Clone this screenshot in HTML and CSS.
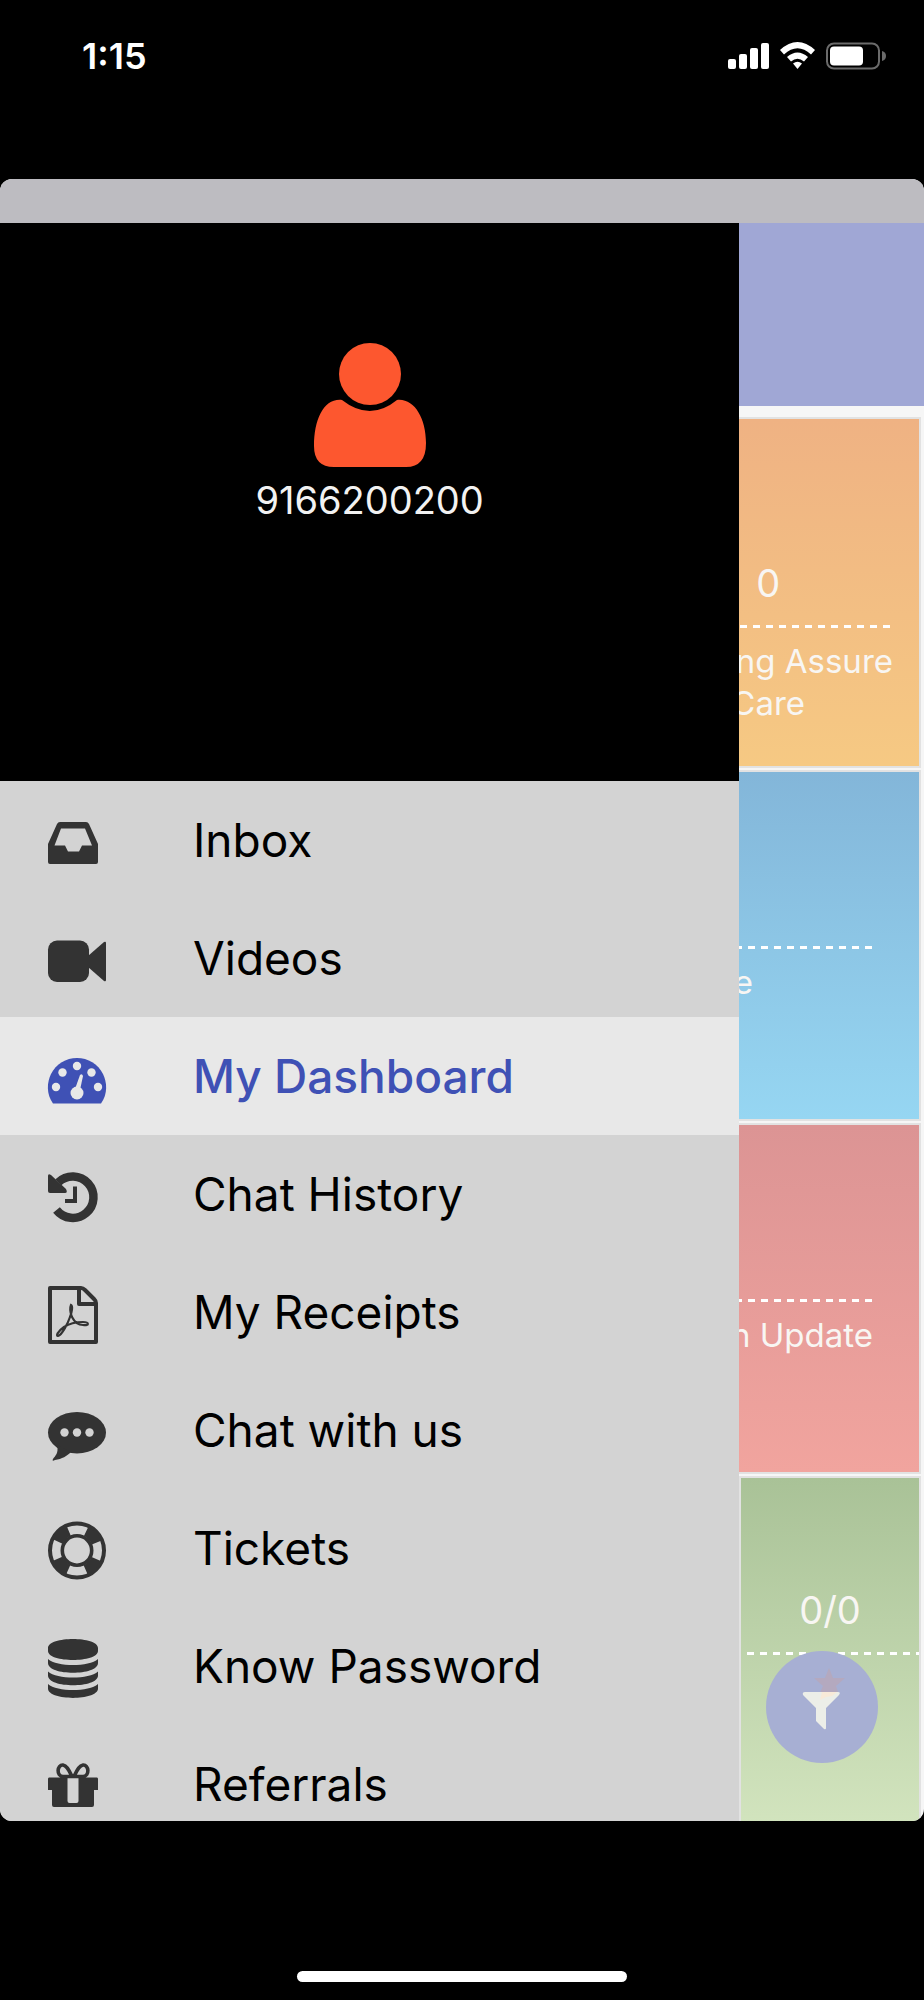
FILE: index.html
```html
<!DOCTYPE html>
<html lang="en">
<head>
<meta charset="utf-8">
<meta name="viewport" content="width=device-width, initial-scale=1">
<title>My Dashboard</title>
<link rel="stylesheet" href="styles.css">
</head>
<body>
<div class="phone">
  <header class="status">
    <time class="clock">1:15</time>
    <svg class="signals" width="158" height="28" viewBox="0 0 158 28" fill="#fff" aria-hidden="true">
      <rect x="0" y="17" width="8" height="10" rx="2"/>
      <rect x="11" y="12" width="8" height="15" rx="2"/>
      <rect x="22" y="6" width="8" height="21" rx="2"/>
      <rect x="33" y="1" width="8" height="26" rx="2"/>
      <path d="M52 8Q69.500 -8 87 8L83 12.500Q69.500 0 56 12.500Z"/>
      <path d="M59 15Q69.500 6 80 15L76 19.500Q69.500 14 63 19.500Z"/>
      <path d="M65 21.500Q69.500 18 74 21.500L69.500 27Z"/>
      <rect x="99" y="1.500" width="52" height="25" rx="7" fill="none" stroke="#6b6b6b" stroke-width="2"/>
      <rect x="102" y="4.500" width="33" height="19" rx="4"/>
      <path d="M154 9q4 1 4 5t-4 5z" fill="#6b6b6b"/>
    </svg>
  </header>

  <div class="app">
    <div class="app-strip"></div>
    <div class="stage">
      <main class="content">
        <div class="toolbar"></div>
        <div class="cards">
          <section class="card card-orange">
            <p class="count">0</p>
            <p class="caption"><span class="line line-end">ng Assure</span><span class="line">Care</span></p>
          </section>
          <section class="card card-blue">
            <p class="count"></p>
            <p class="caption"><span class="line">e</span></p>
          </section>
          <section class="card card-red">
            <p class="count"></p>
            <p class="caption"><span class="line line-end">n Update</span></p>
          </section>
          <section class="card card-green">
            <p class="count">0/0</p>
            <p class="caption"></p>
          </section>
        </div>
      </main>

      <button class="fab" aria-label="Filter">
        <svg width="112" height="112" viewBox="0 0 112 112" aria-hidden="true">
          <path d="M63 17l4 10h12l-9 8 3 9H53l4-9-9-8h11z" fill="#b4a9bf"/>
          <path d="M39 41h33q3 0 1 3L60 57v20q0 2-2 1l-8-8V57L37 44q-1-3 2-3z" fill="#eceee8"/>
          <path d="M56 41h15l-5 4-6 1-6 3z" fill="#f8ead8"/>
        </svg>
      </button>

      <aside class="drawer">
        <div class="profile">
          <svg width="112" height="124" viewBox="0 0 112 124" fill="#fd572f" aria-hidden="true">
            <circle cx="56" cy="31" r="31"/>
            <path d="M28 57Q56 79 83 57C100 55 112 75 112 100Q112 124 92 124H20Q0 124 0 103C0 76 10 55 28 57Z"/>
          </svg>
          <p class="phone-number">9166200200</p>
        </div>
        <nav class="menu">
          <a class="item" href="#inbox">
            <svg class="icon" viewBox="0 0 60 60"><path fill-rule="evenodd" d="M12 12h26q2 0 3 2l9 20v18q0 2-2 2H2q-2 0-2-2V34l9-20q1-2 3-2zM13 18.500L6.500 35.500H17l3 6h11l3-6h10L37 18.500z"/></svg>
            <span>Inbox</span></a>
          <a class="item" href="#videos">
            <svg class="icon" viewBox="0 0 60 60"><rect y="12.500" width="41" height="41.500" rx="9"/><path d="M40 28L56 14q2-1 2 1v37q0 2-2 1L40 39z"/></svg>
            <span>Videos</span></a>
          <a class="item item-active" href="#dashboard" aria-current="page">
            <svg class="icon" viewBox="0 0 60 60"><path d="M5 57.500C-2 48-1 36 3 28 8 18 18 12 29 12s21 6 26 16c4 8 5 20-2 29.500z"/><g class="cutout"><circle cx="8" cy="41" r="4.200"/><circle cx="14.500" cy="26.500" r="4.200"/><circle cx="29" cy="20" r="4.200"/><circle cx="43.500" cy="26.500" r="4.200"/><circle cx="50" cy="41" r="4.200"/><circle cx="29" cy="47" r="6.500"/><path d="M27 43l5-14q2-2 3 1l-3 14z"/></g></svg>
            <span>My Dashboard</span></a>
          <a class="item" href="#history">
            <svg class="icon" viewBox="0 0 60 60"><path d="M8.500 46A20.700 20.700 0 1 0 10.400 18.300" fill="none" stroke="currentColor" stroke-width="8.500"/><path d="M0 12q0-3 3-1L18 25q2 4-1 4H2q-2 0-2-2z"/><path d="M27 22.500V37H17" fill="none" stroke="currentColor" stroke-width="4"/></svg>
            <span>Chat History</span></a>
          <a class="item" href="#receipts">
            <svg class="icon" viewBox="0 0 60 60" ><g fill="none" stroke="currentColor"><path stroke-width="4" stroke-linejoin="round" d="M2 6h31q2 0 4 2l9 9q2 2 2 4v39H2zM31 6v16h17"/><path stroke-width="2.200" d="M23 23c-2 5 0 9 1 12 3 6 7 8 11 8 7 1 6-3 0-3-6 0-13 1-19 5-7 5-8 9-6 9 4-1 10-13 12-19 2-5 3-11 1-12z"/></g></svg>
            <span>My Receipts</span></a>
          <a class="item" href="#chat">
            <svg class="icon" viewBox="0 0 60 60"><ellipse cx="29" cy="32.700" rx="29" ry="20.700"/><path d="M9 45c2 8-2 11-4 14-1 2 0 2 2 1 7-1 12-4 16-8z"/><g class="cutout"><circle cx="16.500" cy="32.500" r="4.200"/><circle cx="29" cy="32.500" r="4.200"/><circle cx="41.500" cy="32.500" r="4.200"/></g></svg>
            <span>Chat with us</span></a>
          <a class="item" href="#tickets">
            <svg class="icon" viewBox="0 0 60 60"><g fill="none" stroke="currentColor"><circle cx="29" cy="32.500" r="27" stroke-width="4"/><circle cx="29" cy="32.500" r="14.700" stroke-width="3.600"/><circle cx="29" cy="32.500" r="21" stroke-width="10" stroke-dasharray="15.300 17.687" transform="rotate(24 29 32.500)"/></g></svg>
            <span>Tickets</span></a>
          <a class="item" href="#password">
            <svg class="icon" viewBox="0 0 60 60"><path d="M0 12C0 0 50 0 50 12v3C50 27 0 27 0 15zM0 23C9 31 41 31 50 23v4C50 40 0 40 0 27zM0 35.500C9 43.500 41 43.500 50 35.500v4C50 52.500 0 52.500 0 39.500zM0 48C9 56 41 56 50 48v4.500C50 65 0 65 0 52.500z"/></svg>
            <span>Know Password</span></a>
          <a class="item" href="#referrals">
            <svg class="icon" viewBox="0 0 60 60"><path fill-rule="evenodd" d="M0 25q0-1.500 1-1.500h48q1 0 1 1.500v11h-4v15q0 2-2 2H6q-2 0-2-2V36H0zM19.500 24v23q0 2 2 2h7q2 0 2-2V24z"/><path d="M24 22.500c-3-6-5-11-9-11.500-6-.5-7 11 0 11.500zM26 22.500c3-6 5-11 9-11.500 6-.5 7 11 0 11.500z" fill="none" stroke="currentColor" stroke-width="3.600"/></svg>
            <span>Referrals</span></a>
        </nav>
      </aside>
    </div>
  </div>

  <footer class="home"><div class="home-bar"></div></footer>
</div>
</body>
</html>
```

FILE: styles.css
```css
* { box-sizing: border-box; }

body {
  margin: 0;
  background: #000;
  font-family: Inter, "Liberation Sans", sans-serif;
}

p { margin: 0; }

.phone {
  display: flex;
  flex-direction: column;
  height: 100vh;
}

/* Status bar */
.status {
  display: flex;
  justify-content: space-between;
  align-items: flex-start;
  flex: none;
  height: 179px;
  padding: 42px 38px 0 82px;
  color: #fff;
}

.clock {
  font-size: 36px;
  font-weight: 600;
  line-height: 28px;
}

/* App window */
.app {
  display: flex;
  flex-direction: column;
  flex: 1;
  min-height: 0;
  overflow: hidden;
  border-radius: 12px;
  background: #f6f6f6;
}

.app-strip {
  flex: none;
  height: 44px;
  background: #bdbcc1;
}

.stage {
  position: relative;
  flex: 1;
  min-height: 0;
  overflow: hidden;
}

.toolbar {
  height: 183px;
  background: #a0a7d5;
}

.cards {
  display: flex;
  flex-direction: column;
  align-items: flex-end;
  gap: 6px;
  padding: 13px 5px 0;
}

.card {
  width: 50%;
  height: 347px;
  box-shadow: 0 0 0 2px #e2e2e2;
  color: #f8f6f3;
  text-align: center;
}

.card-orange {
  width: 33%;
  padding: 140px 26px 0;
  background: linear-gradient(#efb283, #f6c983);
}

.card-blue {
  padding: 108px 46px 0;
  background: linear-gradient(#83b6d9, #96d6f2);
}

.card-red {
  padding: 108px 46px 0;
  background: linear-gradient(#dc9494, #f1a49e);
}

.card-green {
  width: 178px;
  padding: 108px 0 0;
  background: linear-gradient(#a9c297, #d2e4be);
}

.count {
  height: 66px;
  font-size: 38px;
  line-height: 48px;
}

.caption {
  padding-top: 15px;
  background: repeating-linear-gradient(90deg, transparent 0 6px, #fff 6px 13px) top / 100% 3px no-repeat;
  font-size: 33px;
  line-height: 42px;
}

.line {
  display: block;
  white-space: nowrap;
}

.line-end { text-align: right; }

.card-blue .line {
  padding-right: 120px;
  text-align: right;
}

.fab {
  position: absolute;
  right: 46px;
  bottom: 58px;
  width: 112px;
  height: 112px;
  padding: 0;
  border: 0;
  border-radius: 50%;
  background: #a7afd3;
}

/* Drawer */
.drawer {
  position: absolute;
  inset: 0 auto 0 0;
  width: 80%;
  overflow: hidden;
  background: #d3d3d3;
}

.profile {
  display: flex;
  flex-direction: column;
  align-items: center;
  height: 558px;
  padding-top: 120px;
  background: #000;
}

.phone-number {
  padding-top: 9px;
  color: #f2f2f2;
  font-size: 38px;
  line-height: 48px;
}

.item {
  display: flex;
  align-items: center;
  height: 118px;
  padding-left: 48px;
  gap: 85px;
  color: #000;
  font-size: 46px;
  text-decoration: none;
  white-space: nowrap;
}

.item-active {
  background: #e8e8e8;
  color: #3f51b5;
  font-weight: 500;
}

.icon {
  flex: none;
  width: 60px;
  height: 60px;
  overflow: visible;
  color: #333;
  fill: currentColor;
}

.item-active .icon { color: #3f51b5; }

.cutout { fill: #d3d3d3; }
.item-active .cutout { fill: #e8e8e8; }

/* Home indicator */
.home {
  display: flex;
  justify-content: center;
  align-items: flex-end;
  flex: none;
  height: 179px;
  padding-bottom: 18px;
}

.home-bar {
  width: 330px;
  height: 11px;
  border-radius: 6px;
  background: #fff;
}
```
